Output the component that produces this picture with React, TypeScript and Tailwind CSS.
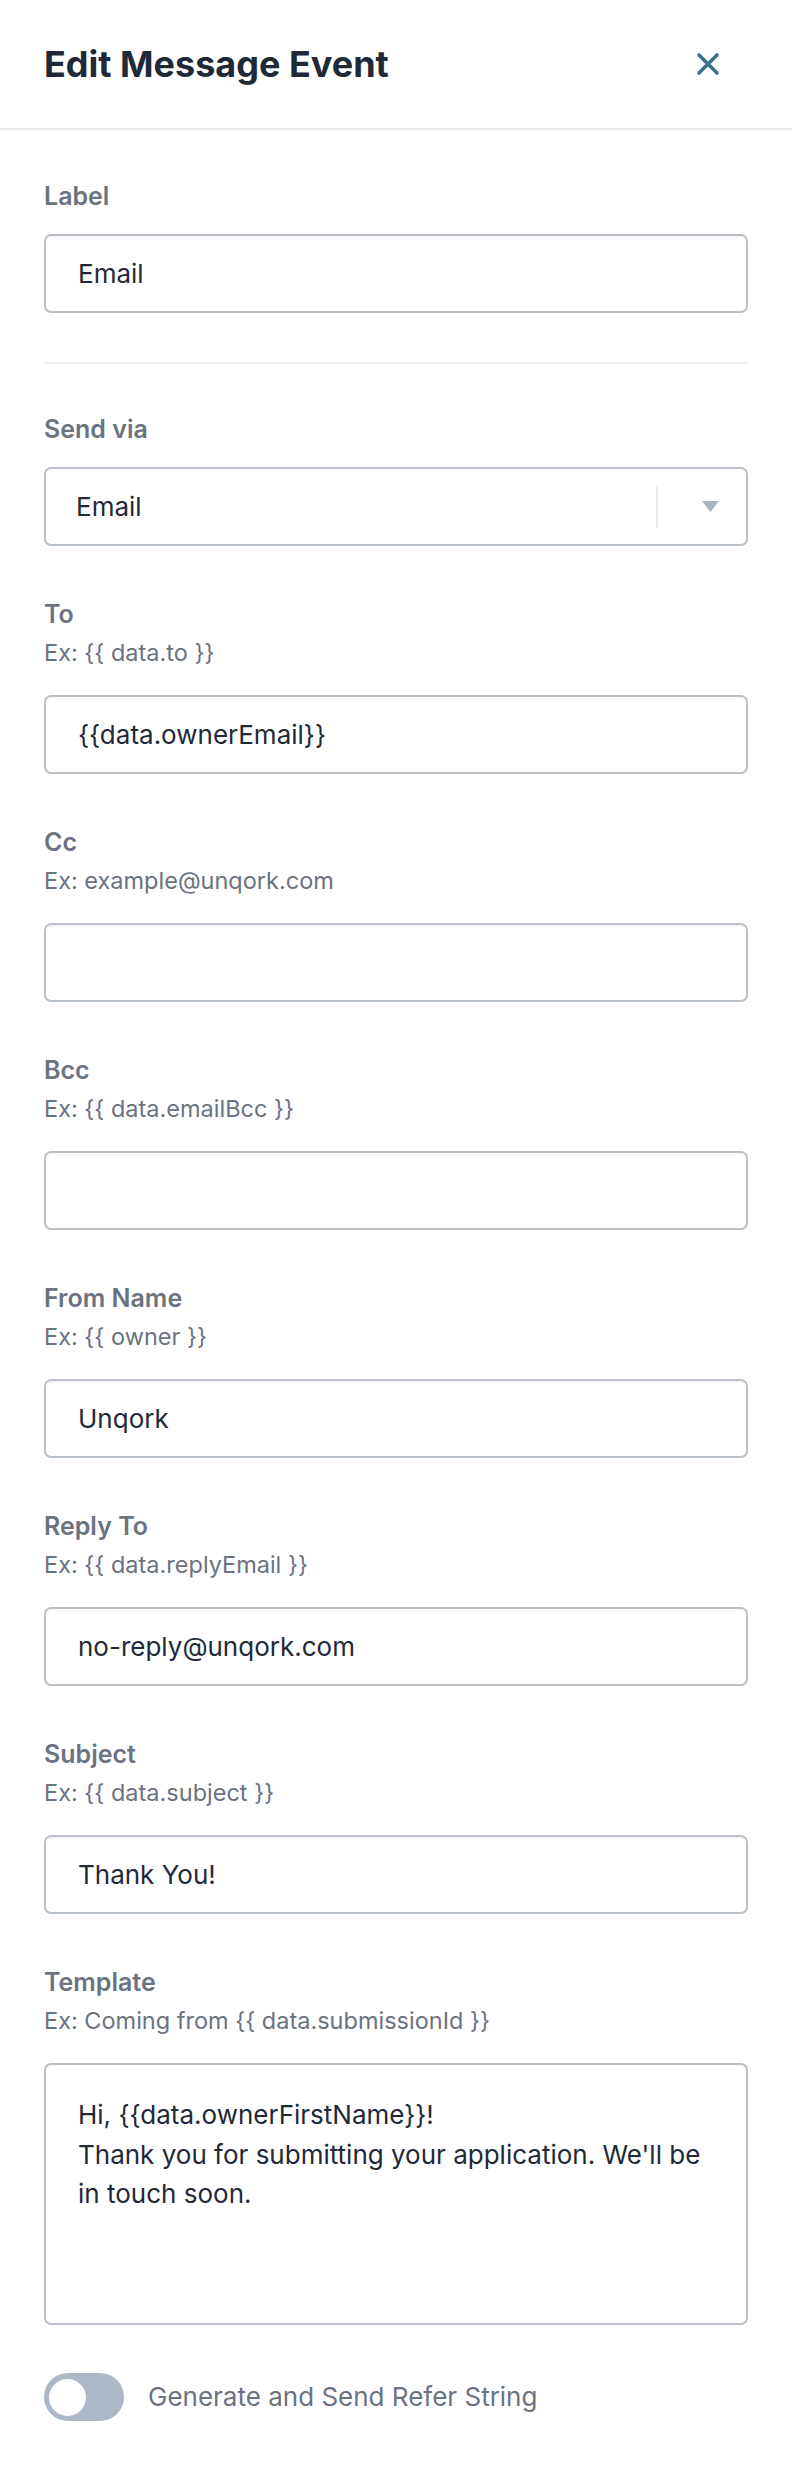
import { useState } from "react";

interface FieldProps {
    readonly label: string;
    readonly hint?: string;
    readonly value?: string;
}

const inputClass =
    "block w-full h-[79px] rounded-[7px] border-2 border-[#b9c0ca] bg-white px-[32px] text-[26px] text-[#1f2937] outline-none shadow-[inset_0_2px_2px_rgba(0,0,0,0.04)]";

const FieldLabel = ({ label, hint }: { label: string; hint?: string }) => (
    <div className={hint ? "mb-[25px]" : "mb-[20px]"}>
        <div className="text-[25px] leading-[36px] font-semibold text-[#6b7280]">{label}</div>
        {hint && (
            <div className="mt-[4px] text-[23.5px] leading-[34px] text-[#6b7280]">{hint}</div>
        )}
    </div>
);

const Field = ({ label, hint, value }: FieldProps) => (
    <div className="mb-[50px]">
        <FieldLabel label={label} hint={hint} />
        <input className={inputClass} defaultValue={value ?? ""} />
    </div>
);

const App = () => {
    const [refer, setRefer] = useState(false);

    return (
        <div className="min-h-screen w-full bg-white font-['Inter',sans-serif]">
            <header className="flex h-[130px] items-center justify-between border-b-2 border-[#e5e7eb] pl-[44px] pr-[72px]">
                <h1 className="text-[36px] leading-[44px] font-bold text-[#1f2937]">
                    Edit Message Event
                </h1>
                <button aria-label="Close" className="flex h-[24px] w-[24px] items-center justify-center text-[#41708c]">
                    <svg viewBox="0 0 24 24" width="24" height="24" fill="none" stroke="currentColor" strokeWidth="3.6" strokeLinecap="round">
                        <path d="M3 3L21 21M21 3L3 21" />
                    </svg>
                </button>
            </header>

            <div className="px-[44px] pt-[48px] pb-[48px]">
                <div>
                    <FieldLabel label="Label" />
                    <input className={inputClass} defaultValue="Email" />
                </div>

                <div className="mt-[49px] mb-[47px] h-[2px] bg-[#eef0f3]" />

                <div className="mb-[50px]">
                    <FieldLabel label="Send via" />
                    <div className="flex h-[79px] w-full items-center rounded-[7px] border-2 border-[#b9c0ca] bg-white">
                        <div className="flex-1 pl-[30px] text-[26px] text-[#1f2937]">Email</div>
                        <div className="h-[43px] w-[2px] bg-[#e8eaed]" />
                        <div className="flex w-[88px] items-center justify-center pl-[16px]">
                            <svg width="17" height="11" viewBox="0 0 17 11">
                                <path d="M0 0H17L8.5 11Z" fill="#a9b3bf" />
                            </svg>
                        </div>
                    </div>
                </div>

                <Field label="To" hint="Ex: {{ data.to }}" value="{{data.ownerEmail}}" />
                <Field label="Cc" hint="Ex: example@unqork.com" />
                <Field label="Bcc" hint="Ex: {{ data.emailBcc }}" />
                <Field label="From Name" hint="Ex: {{ owner }}" value="Unqork" />
                <Field label="Reply To" hint="Ex: {{ data.replyEmail }}" value="no-reply@unqork.com" />
                <Field label="Subject" hint="Ex: {{ data.subject }}" value="Thank You!" />

                <div className="mb-[48px]">
                    <FieldLabel label="Template" hint="Ex: Coming from {{ data.submissionId }}" />
                    <textarea
                        className="block h-[262px] w-full resize-none rounded-[7px] border-2 border-[#b9c0ca] bg-white px-[32px] pt-[30px] text-[26px] leading-[39.5px] text-[#1f2937] outline-none"
                        defaultValue={"Hi, {{data.ownerFirstName}}!\nThank you for submitting your application. We'll be in touch soon."}
                    />
                </div>

                <label className="flex items-center gap-[24px]">
                    <button
                        type="button"
                        onClick={() => setRefer(!refer)}
                        className={`flex h-[48px] w-[80px] items-center rounded-full px-[5px] ${refer ? "justify-end bg-[#41708c]" : "justify-start bg-[#adb8c6]"}`}
                    >
                        <span className="block h-[37px] w-[37px] rounded-full bg-white" />
                    </button>
                    <span className="text-[26px] leading-[36px] text-[#6b7280]">
                        Generate and Send Refer String
                    </span>
                </label>
            </div>
        </div>
    );
};

export default App;
